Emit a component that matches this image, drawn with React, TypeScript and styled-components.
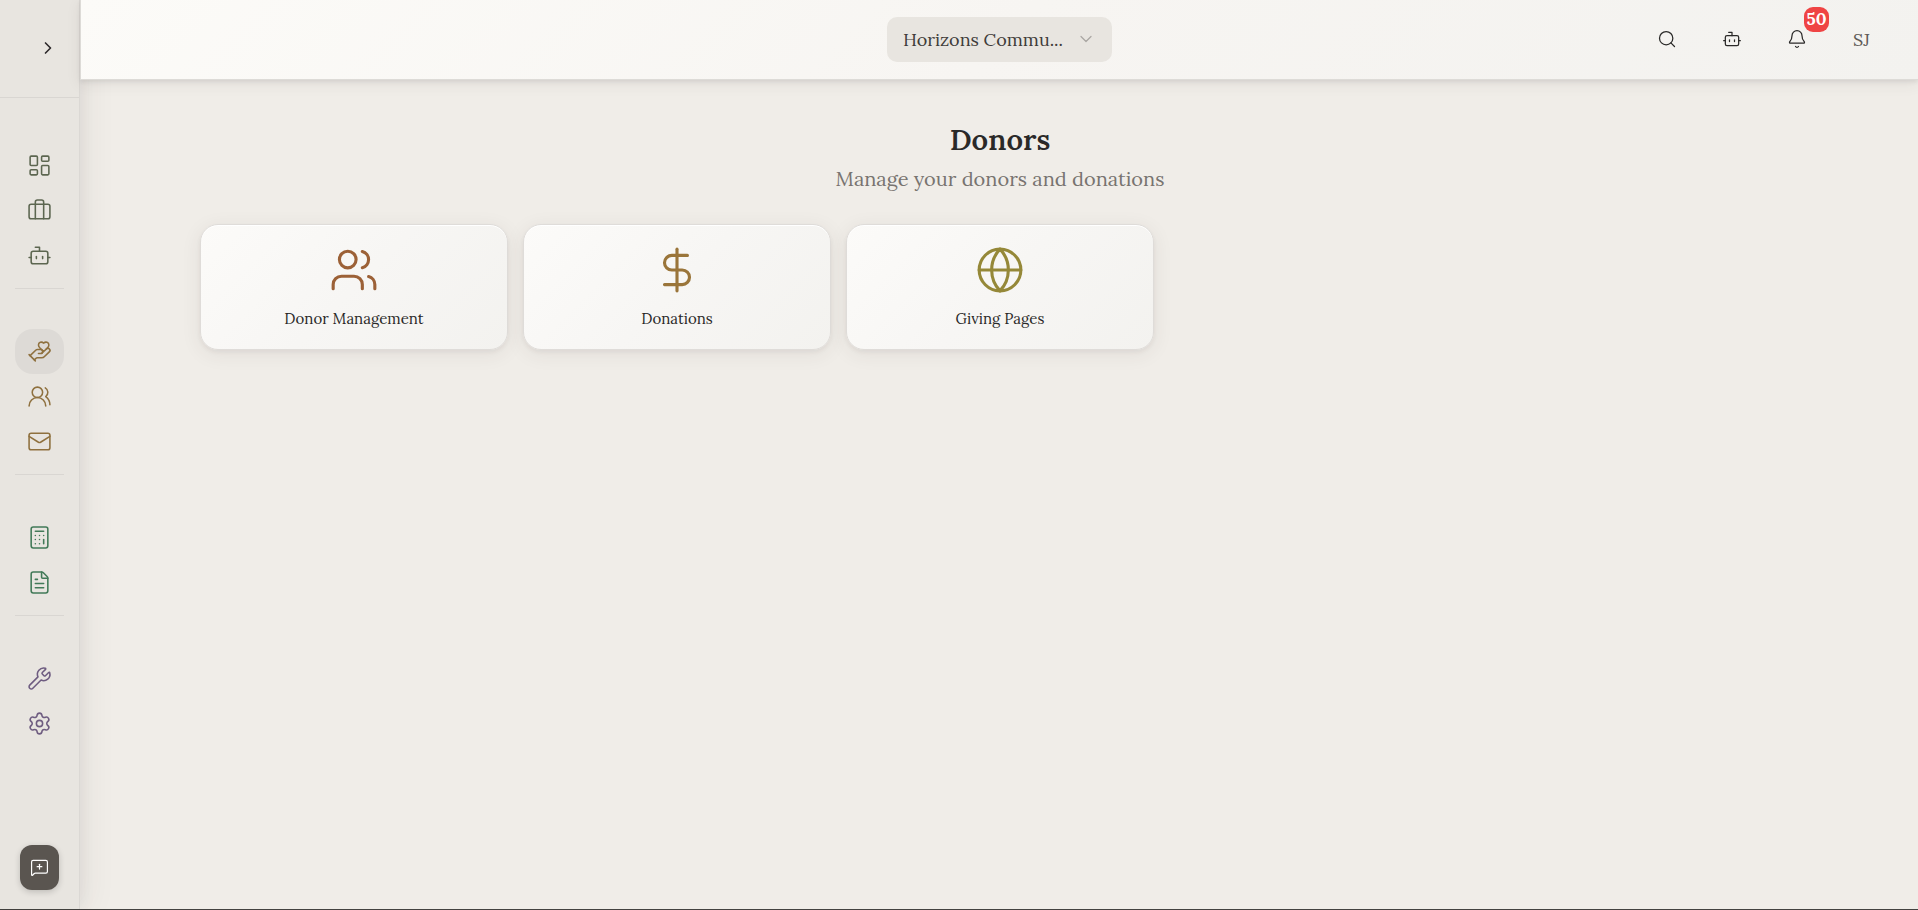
import React from 'react';
import styled, { createGlobalStyle } from 'styled-components';
import {
  Bell, Bot, Briefcase, Calculator, ChevronDown, ChevronRight, DollarSign, FileText, Globe,
  HandHeart, LayoutDashboard, Mail, MessageSquarePlus, Search, Settings, Users, UsersRound, Wrench,
} from 'lucide-react';
import type { LucideIcon } from 'lucide-react';

const GlobalStyle = createGlobalStyle`
  *, *::before, *::after { box-sizing: border-box; }
  body {
    margin: 0;
    background: #f0ede8;
    color: #2a2928;
    font-family: Lora, "Liberation Serif", serif;
  }
  button { font: inherit; color: inherit; border: 0; padding: 0; background: none; cursor: pointer; }
  a { color: inherit; text-decoration: none; }
  h1, p { margin: 0; }
`;

const Shell = styled.div`
  display: flex;
  min-height: 100vh;
  border-bottom: 1px solid #43423f;
`;

const Sidebar = styled.aside`
  position: relative;
  z-index: 1;
  display: flex;
  flex-direction: column;
  flex: 0 0 80px;
  background: #e8e5e0;
  border-right: 1px solid #dbd8d4;
  box-shadow: 4px 0 12px rgba(60, 55, 70, 0.05), 8px 0 32px rgba(60, 55, 50, 0.06);
`;

const SidebarTop = styled.div`
  display: flex;
  align-items: center;
  justify-content: flex-end;
  height: 98px;
  padding: 0 21px 2px 0;
  border-bottom: 1px solid #d9d6d2;
`;

const ToggleButton = styled.button`
  display: grid;
  place-items: center;
  color: #2d2a2c;
`;

const Nav = styled.nav`
  flex: 1;
  padding: 5px 15px 0;
`;

const NavGroup = styled.div<{ $color: string }>`
  padding: 40px 0 10px;
  color: ${(p) => p.$color};
  &:not(:last-child) { border-bottom: 1px solid #d9d6d2; }
`;

const NavLink = styled.a<{ $active?: boolean }>`
  display: grid;
  place-items: center;
  height: 45px;
  border-radius: 18px;
  background: ${(p) => (p.$active ? '#dddad6' : 'transparent')};
`;

const FeedbackButton = styled.button`
  display: grid;
  place-items: center;
  align-self: center;
  width: 39px;
  height: 45px;
  margin-bottom: 19px;
  border-radius: 12px;
  background: #5a5550;
  color: #fff;
  box-shadow: 0 2px 6px rgba(0, 0, 0, 0.18);
`;

const Page = styled.div`
  flex: 1;
  min-width: 0;
`;

const Header = styled.header`
  position: relative;
  z-index: 2;
  display: grid;
  grid-template-columns: 1fr auto 1fr;
  align-items: center;
  height: 80px;
  padding-right: 34px;
  padding-left: 34px;
  border-left: 1px solid #dddbd7;
  border-bottom: 1px solid #dddbd7;
  background: linear-gradient(135deg, #fcfbf8, #f7f5f2 50%, #f3f2ef);
  box-shadow: 0 2px 4px rgba(60, 50, 50, 0.09), 0 4px 14px rgba(60, 50, 50, 0.08);
`;

const OrgButton = styled.button`
  grid-column: 2;
  display: flex;
  align-items: center;
  justify-content: space-between;
  width: 225px;
  height: 45px;
  padding: 0 16px 1px;
  border-radius: 10px;
  background: #e8e5e0;
  color: #3f3c3a;
  font-size: 18px;
`;

const OrgName = styled.span`
  overflow: hidden;
  white-space: nowrap;
`;

const Actions = styled.div`
  display: flex;
  justify-content: flex-end;
  gap: 20px;
`;

const ActionButton = styled.button`
  position: relative;
  display: grid;
  place-items: center;
  width: 45px;
  height: 45px;
  padding-bottom: 1px;
  color: #2a2928;
`;

const Initials = styled.span`
  color: #5f5b57;
  font-size: 18px;
`;

const Badge = styled.span`
  position: absolute;
  top: -10px;
  right: -10px;
  width: 25px;
  height: 25px;
  border-radius: 9px;
  background: #ef4444;
  color: #fff;
  font-size: 17px;
  font-weight: 700;
  line-height: 24px;
  text-align: center;
`;

const Content = styled.main`
  padding: 40px 118px 0 120px;
`;

const Title = styled.h1`
  font-size: 29px;
  font-weight: 600;
  line-height: 40px;
  text-align: center;
`;

const Subtitle = styled.p`
  color: #787470;
  font-size: 20px;
  line-height: 38px;
  text-align: center;
`;

const CardGrid = styled.div`
  display: grid;
  grid-template-columns: repeat(5, 1fr);
  gap: 15px;
  margin-top: 26px;
`;

const Card = styled.a`
  display: flex;
  flex-direction: column;
  align-items: center;
  gap: 12px;
  height: 126px;
  padding-top: 20px;
  border: 1px solid #dfdcd9;
  border-radius: 18px;
  background: linear-gradient(135deg, #fcfbf9, #f7f6f4 50%, #f3f2ef);
  box-shadow: 0 2px 4px rgba(60, 50, 50, 0.06), 0 4px 20px rgba(60, 50, 50, 0.08), inset 0 1px 0 #fff;
`;

const CardLabel = styled.span`
  font-size: 15px;
  line-height: 24px;
`;

type Entry = { icon: LucideIcon; label: string; active?: boolean };

const groups: { color: string; items: Entry[] }[] = [
  {
    color: '#5c6650',
    items: [
      { icon: LayoutDashboard, label: 'Dashboard' },
      { icon: Briefcase, label: 'Workspace' },
      { icon: Bot, label: 'Assistant' },
    ],
  },
  {
    color: '#8f713f',
    items: [
      { icon: HandHeart, label: 'Donors', active: true },
      { icon: UsersRound, label: 'People' },
      { icon: Mail, label: 'Mail' },
    ],
  },
  {
    color: '#427a58',
    items: [
      { icon: Calculator, label: 'Accounting' },
      { icon: FileText, label: 'Reports' },
    ],
  },
  {
    color: '#6e5c80',
    items: [
      { icon: Wrench, label: 'Tools' },
      { icon: Settings, label: 'Settings' },
    ],
  },
];

const cards = [
  { icon: Users, label: 'Donor Management', color: '#9c6137' },
  { icon: DollarSign, label: 'Donations', color: '#9a753a' },
  { icon: Globe, label: 'Giving Pages', color: '#958838' },
];

export default function App() {
  return (
    <>
      <GlobalStyle />
      <Shell>
        <Sidebar>
          <SidebarTop>
            <ToggleButton aria-label="Expand sidebar">
              <ChevronRight size={20} strokeWidth={2} />
            </ToggleButton>
          </SidebarTop>
          <Nav>
            {groups.map((group) => (
              <NavGroup key={group.color} $color={group.color}>
                {group.items.map(({ icon: Icon, label, active }) => (
                  <NavLink key={label} href="#" aria-label={label} $active={active}>
                    <Icon size={25} strokeWidth={1.5} />
                  </NavLink>
                ))}
              </NavGroup>
            ))}
          </Nav>
          <FeedbackButton aria-label="Send feedback">
            <MessageSquarePlus size={19} strokeWidth={1.5} />
          </FeedbackButton>
        </Sidebar>
        <Page>
          <Header>
            <OrgButton>
              <OrgName>Horizons Commu...</OrgName>
              <ChevronDown size={20} strokeWidth={1.5} color="#aaa7a3" />
            </OrgButton>
            <Actions>
              <ActionButton aria-label="Search"><Search size={20} strokeWidth={1.5} /></ActionButton>
              <ActionButton aria-label="Assistant"><Bot size={20} strokeWidth={1.5} /></ActionButton>
              <ActionButton aria-label="Notifications">
                <Bell size={20} strokeWidth={1.5} />
                <Badge>50</Badge>
              </ActionButton>
              <ActionButton aria-label="Account"><Initials>SJ</Initials></ActionButton>
            </Actions>
          </Header>
          <Content>
            <Title>Donors</Title>
            <Subtitle>Manage your donors and donations</Subtitle>
            <CardGrid>
              {cards.map(({ icon: Icon, label, color }) => (
                <Card key={label} href="#">
                  <Icon size={50} strokeWidth={1.5} color={color} />
                  <CardLabel>{label}</CardLabel>
                </Card>
              ))}
            </CardGrid>
          </Content>
        </Page>
      </Shell>
    </>
  );
}
